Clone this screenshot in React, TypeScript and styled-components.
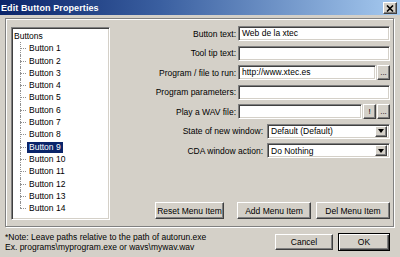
import React from 'react';
import styled, { createGlobalStyle, css } from 'styled-components';

// === GLOBAL ===
const GlobalStyle = createGlobalStyle`
  html, body {
    margin: 0;
    padding: 0;
    background: #d4d0c8;
  }
  body {
    font-family: "Liberation Sans", Arial, sans-serif;
    font-size: 8.5px;
    color: #000;
  }
  * { box-sizing: border-box; }
`;

// === SHARED BEVELS ===
const raised = css`
  background: #d4d0c8;
  border: 1px solid;
  border-color: #fff #404040 #404040 #fff;
  box-shadow: inset -1px -1px 0 #808080;
`;

const sunken = css`
  background: #fff;
  border: 1px solid;
  border-color: #808080 #fff #fff #808080;
  box-shadow: inset 1px 1px 0 #404040, inset -1px -1px 0 #d4d0c8;
`;

// === WINDOW ===
const Window = styled.div`
  width: 400px;
  height: 257px;
  display: flex;
  flex-direction: column;
  overflow: hidden;
  background: #d4d0c8;
`;

const TitleBar = styled.div`
  height: 15px;
  display: flex;
  align-items: center;
  justify-content: space-between;
  padding: 0 3px 0 1px;
  background: linear-gradient(90deg, #0a246a 0%, #3a5fa0 40%, #a6caf0 100%);
`;

const TitleText = styled.span`
  color: #fff;
  font-weight: bold;
  font-size: 9px;
  letter-spacing: 0.1px;
`;

const CloseButton = styled.div`
  ${raised};
  width: 14px;
  height: 12px;
  display: flex;
  align-items: center;
  justify-content: center;
  margin-top: 1px;
`;

const Content = styled.div`
  flex: 1;
  display: flex;
  flex-direction: column;
  padding: 3px 6px 0 5px;
`;

const Frame = styled.div`
  height: 209px;
  display: flex;
  padding: 8px 3px 6px 5px;
  border: 1px solid #808080;
  box-shadow: inset 1px 1px 0 #fff, 1px 1px 0 #fff;
`;

// === TREE ===
const TreeBox = styled.div`
  ${sunken};
  width: 99px;
  padding: 2px 1px;
  overflow: hidden;
`;

const TreeRow = styled.div`
  height: 12.3px;
  line-height: 12.3px;
  padding-left: 1px;
  white-space: nowrap;
`;

const TreeList = styled.ul`
  list-style: none;
  margin: 0;
  padding: 0;
`;

const TreeItem = styled.li<{ $last?: boolean }>`
  position: relative;
  height: 12.3px;
  line-height: 12.3px;
  padding-left: 14px;
  white-space: nowrap;

  &::before {
    content: '';
    position: absolute;
    left: 7px;
    top: 6px;
    width: 6px;
    border-top: 1px dotted #909090;
  }

  &::after {
    content: '';
    position: absolute;
    left: 7px;
    top: 0;
    height: ${p => (p.$last ? '6px' : '100%')};
    border-left: 1px dotted #909090;
  }
`;

const ItemLabel = styled.span<{ $selected?: boolean }>`
  display: inline-block;
  padding: 0 2px;
  line-height: 11px;
  background: ${p => (p.$selected ? '#0a246a' : 'transparent')};
  color: ${p => (p.$selected ? '#fff' : '#000')};
`;

// === FORM ===
const RightColumn = styled.div`
  flex: 1;
  display: flex;
  flex-direction: column;
  margin-top: -1px;
`;

const Form = styled.div`
  display: flex;
  flex-direction: column;
  gap: 4.5px;
`;

const FieldRow = styled.div`
  height: 15px;
  display: flex;
  align-items: center;
  justify-content: flex-end;
`;

const Label = styled.span<{ $gap: number }>`
  margin-right: ${p => p.$gap}px;
  white-space: nowrap;
`;

const Field = styled.div<{ $width: number }>`
  width: ${p => p.$width}px;
  height: 15px;
  display: flex;
  gap: 1px;
`;

const TextBox = styled.div`
  ${sunken};
  flex: 1;
  height: 15px;
  padding: 0 3px;
  line-height: 13px;
  white-space: nowrap;
  overflow: hidden;
`;

const SmallButton = styled.div<{ $centered?: boolean }>`
  ${raised};
  width: 13px;
  height: 15px;
  display: flex;
  align-items: ${p => (p.$centered ? 'center' : 'flex-end')};
  justify-content: center;
  padding-bottom: ${p => (p.$centered ? 0 : 2)}px;
  line-height: 8px;
  font-size: 8px;
`;

const SelectBox = styled.div`
  ${sunken};
  flex: 1;
  height: 15px;
  display: flex;
  align-items: center;
  justify-content: space-between;
  padding: 2px 2px 2px 3px;
`;

const SelectText = styled.span`
  white-space: nowrap;
`;

const DropButton = styled.div`
  ${raised};
  width: 12px;
  height: 11px;
  display: flex;
  align-items: center;
  justify-content: center;
`;

const Arrow = styled.span`
  width: 0;
  height: 0;
  border-left: 3.5px solid transparent;
  border-right: 3.5px solid transparent;
  border-top: 4px solid #000;
`;

const ActionRow = styled.div`
  margin-top: auto;
  margin-bottom: 1px;
  display: flex;
  justify-content: flex-end;
`;

const PushButton = styled.div<{ $width: number; $height?: number; $gapAfter?: number; $default?: boolean }>`
  ${raised};
  width: ${p => p.$width}px;
  height: ${p => p.$height ?? 17}px;
  margin-right: ${p => p.$gapAfter ?? 0}px;
  display: flex;
  align-items: center;
  justify-content: center;
  white-space: nowrap;

  ${p => p.$default && css`
    border: 1px solid #000;
    box-shadow: inset 1px 1px 0 #fff, inset -1px -1px 0 #404040, inset -2px -2px 0 #808080;
  `}
`;

// === FOOTER ===
const Footer = styled.div`
  flex: 1;
  display: flex;
  align-items: center;
  justify-content: space-between;
  padding: 0 4px 0 0;
`;

const Note = styled.div`
  line-height: 10px;
  white-space: nowrap;
`;

const FooterButtons = styled.div`
  display: flex;
  align-items: center;
  gap: 5px;
`;

const buttons = Array.from({ length: 14 }, (_, i) => `Button ${i + 1}`);

const App: React.FC = () => {
  return (
    <Window>
      <GlobalStyle />
      <TitleBar>
        <TitleText>Edit Button Properties</TitleText>
        <CloseButton>
          <svg width="8" height="7" viewBox="0 0 8 7">
            <path d="M1 0.5 L7 6.5 M7 0.5 L1 6.5" stroke="#000" strokeWidth="1.6" />
          </svg>
        </CloseButton>
      </TitleBar>

      <Content>
        <Frame>
          <TreeBox>
            <TreeRow>Buttons</TreeRow>
            <TreeList>
              {buttons.map((b, i) => (
                <TreeItem key={b} $last={i === buttons.length - 1}>
                  <ItemLabel $selected={i === 8}>{b}</ItemLabel>
                </TreeItem>
              ))}
            </TreeList>
          </TreeBox>

          <RightColumn>
            <Form>
              <FieldRow>
                <Label $gap={2}>Button text:</Label>
                <Field $width={152}>
                  <TextBox>Web de la xtec</TextBox>
                </Field>
              </FieldRow>
              <FieldRow>
                <Label $gap={2}>Tool tip text:</Label>
                <Field $width={152}>
                  <TextBox />
                </Field>
              </FieldRow>
              <FieldRow>
                <Label $gap={2}>Program / file to run:</Label>
                <Field $width={152}>
                  <TextBox>http://www.xtec.es</TextBox>
                  <SmallButton>...</SmallButton>
                </Field>
              </FieldRow>
              <FieldRow>
                <Label $gap={2}>Program parameters:</Label>
                <Field $width={152}>
                  <TextBox />
                </Field>
              </FieldRow>
              <FieldRow>
                <Label $gap={2}>Play a WAV file:</Label>
                <Field $width={152}>
                  <TextBox />
                  <SmallButton $centered>!</SmallButton>
                  <SmallButton>...</SmallButton>
                </Field>
              </FieldRow>
              <FieldRow>
                <Label $gap={4}>State of new window:</Label>
                <Field $width={123}>
                  <SelectBox>
                    <SelectText>Default (Default)</SelectText>
                    <DropButton><Arrow /></DropButton>
                  </SelectBox>
                </Field>
              </FieldRow>
              <FieldRow>
                <Label $gap={4}>CDA window action:</Label>
                <Field $width={123}>
                  <SelectBox>
                    <SelectText>Do Nothing</SelectText>
                    <DropButton><Arrow /></DropButton>
                  </SelectBox>
                </Field>
              </FieldRow>
            </Form>

            <ActionRow>
              <PushButton $width={69} $gapAfter={13}>Reset Menu Item</PushButton>
              <PushButton $width={74} $gapAfter={5}>Add Menu Item</PushButton>
              <PushButton $width={74}>Del Menu Item</PushButton>
            </ActionRow>
          </RightColumn>
        </Frame>

        <Footer>
          <Note>
            *Note: Leave paths relative to the path of autorun.exe
            <br />
            Ex. programs\myprogram.exe or wavs\mywav.wav
          </Note>
          <FooterButtons>
            <PushButton $width={58} $height={16}>Cancel</PushButton>
            <PushButton $width={52} $height={18} $default>OK</PushButton>
          </FooterButtons>
        </Footer>
      </Content>
    </Window>
  );
};

export default App;
